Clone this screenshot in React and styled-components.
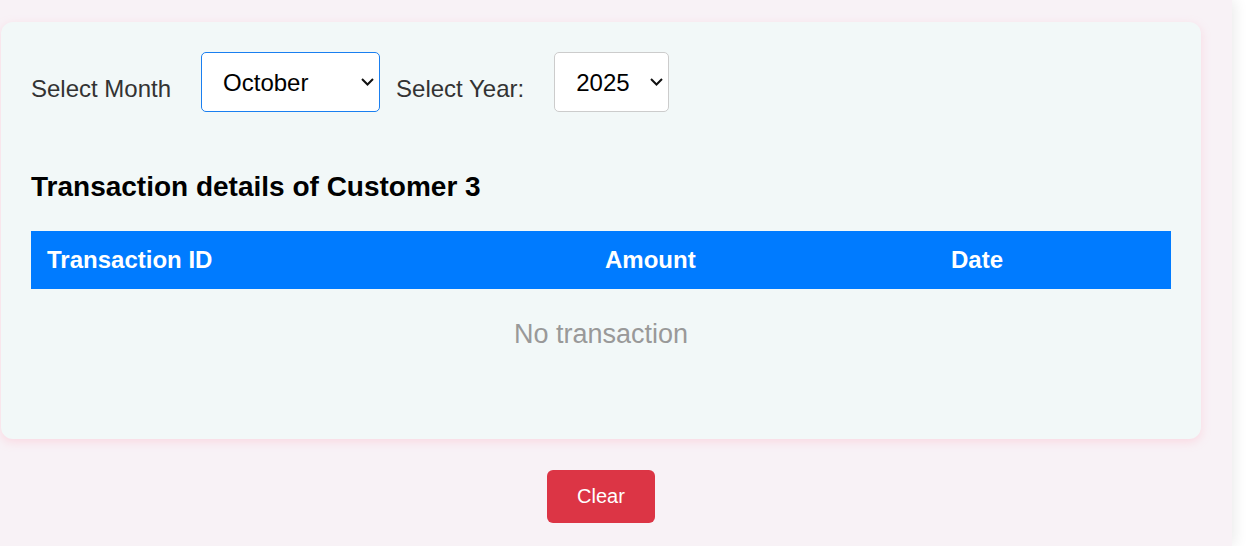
import React from 'react';
import styled, { createGlobalStyle } from 'styled-components';

const GlobalStyle = createGlobalStyle`
  html, body {
    margin: 0;
    padding: 0;
    background: #ffffff;
    overflow: hidden;
  }

  body {
    font-family: "Liberation Sans", Arial, sans-serif;
  }
`;

const months = [
  'January', 'February', 'March', 'April', 'May', 'June', 'July',
  'August', 'September', 'October', 'November', 'December'
];

const years = [2023, 2024, 2025];

function Chevron() {
  return (
    <ChevronIcon width="13" height="8" viewBox="0 0 13 8" aria-hidden="true">
      <polyline points="1,1 6.5,6.5 12,1" fill="none" stroke="#111" strokeWidth="2" />
    </ChevronIcon>
  );
}

function App() {
  return (
    <>
      <GlobalStyle />
      <Page>
        <Column>
          <Card>
            <FilterRow>
              <FilterLabel>Select Month</FilterLabel>
              <SelectWrap>
                <Select $width={179} $focused defaultValue="October">
                  {months.map(m => <option key={m} value={m}>{m}</option>)}
                </Select>
                <Chevron />
              </SelectWrap>
              <FilterLabel $lead>Select Year:</FilterLabel>
              <SelectWrap>
                <Select $width={115} defaultValue="2025">
                  {years.map(y => <option key={y} value={y}>{y}</option>)}
                </Select>
                <Chevron />
              </SelectWrap>
            </FilterRow>

            <Title>Transaction details of Customer 3</Title>

            <Table>
              <thead>
                <tr>
                  <HeadCell $width={558}>Transaction ID</HeadCell>
                  <HeadCell $width={346}>Amount</HeadCell>
                  <HeadCell $width={236}>Date</HeadCell>
                </tr>
              </thead>
              <tbody>
                <tr>
                  <EmptyCell colSpan={3}>No transaction</EmptyCell>
                </tr>
              </tbody>
            </Table>
          </Card>

          <ClearButton type="button">Clear</ClearButton>
        </Column>
      </Page>
    </>
  );
}

const Page = styled.div`
  width: 1232px;
  min-height: 100vh;
  background: #f8f2f6;
  box-shadow: 2px 0 14px rgba(0, 0, 0, 0.09);
  overflow: hidden;
`;

const Column = styled.div`
  width: 1200px;
  margin-left: 1px;
  padding-top: 22px;
  display: flex;
  flex-direction: column;
  align-items: center;
`;

const Card = styled.div`
  width: 100%;
  box-sizing: border-box;
  padding: 30px;
  background: #f2f8f8;
  border-radius: 12px;
  box-shadow: 0 3px 10px rgba(255, 170, 190, 0.35);
`;

const FilterRow = styled.div`
  display: flex;
  align-items: center;
`;

const FilterLabel = styled.label`
  font-size: 24px;
  color: #333333;
  margin-top: 14px;
  margin-right: 30px;
  margin-left: ${p => (p.$lead ? '16px' : '0')};
`;

const SelectWrap = styled.div`
  position: relative;
  display: flex;
`;

const Select = styled.select`
  appearance: none;
  -webkit-appearance: none;
  box-sizing: border-box;
  width: ${p => p.$width}px;
  height: 60px;
  padding: 0 30px 0 21px;
  font-family: "Liberation Sans", Arial, sans-serif;
  font-size: 24px;
  color: #000000;
  background: #ffffff;
  border: 1px solid ${p => (p.$focused ? '#1a7ff0' : '#cccccc')};
  border-radius: 5px;
  outline: none;
`;

const ChevronIcon = styled.svg`
  position: absolute;
  right: 6px;
  top: 26px;
  pointer-events: none;
`;

const Title = styled.h3`
  margin: 59px 0 28px;
  font-size: 28px;
  font-weight: bold;
  color: #000000;
`;

const Table = styled.table`
  width: 100%;
  table-layout: fixed;
  border-collapse: collapse;
`;

const HeadCell = styled.th`
  width: ${p => p.$width}px;
  box-sizing: border-box;
  padding: 15px 16px;
  background: #007bff;
  color: #ffffff;
  font-size: 24px;
  font-weight: bold;
  text-align: left;
`;

const EmptyCell = styled.td`
  padding: 30px 0 59px;
  text-align: center;
  font-size: 27px;
  color: #999999;
`;

const ClearButton = styled.button`
  margin-top: 31px;
  padding: 15px 30px;
  font-family: "Liberation Sans", Arial, sans-serif;
  font-size: 20px;
  color: #ffffff;
  background: #dc3545;
  border: none;
  border-radius: 6px;
  cursor: pointer;
`;

export default App;
